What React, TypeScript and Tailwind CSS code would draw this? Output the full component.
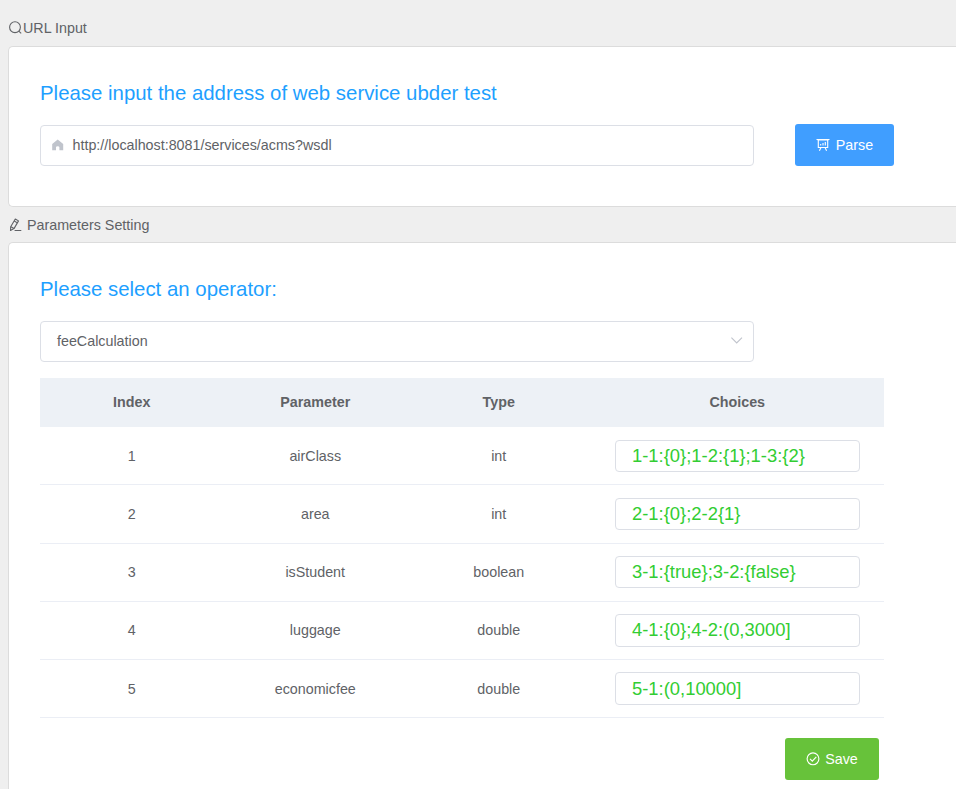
import React from "react";

type Row = { index: number; name: string; type: string; choices: string };

const rows: Row[] = [
  { index: 1, name: "airClass", type: "int", choices: "1-1:{0};1-2:{1};1-3:{2}" },
  { index: 2, name: "area", type: "int", choices: "2-1:{0};2-2{1}" },
  { index: 3, name: "isStudent", type: "boolean", choices: "3-1:{true};3-2:{false}" },
  { index: 4, name: "luggage", type: "double", choices: "4-1:{0};4-2:(0,3000]" },
  { index: 5, name: "economicfee", type: "double", choices: "5-1:(0,10000]" },
];

function SearchIcon() {
  return (
    <svg className="h-[14px] w-[14px] shrink-0" viewBox="0 0 14 14" fill="none" stroke="currentColor" strokeWidth="1.1">
      <circle cx="6" cy="6.2" r="5.4" />
      <path d="M9.8 10.2 12.2 12.4" />
    </svg>
  );
}

function EditIcon() {
  return (
    <svg className="h-[14px] w-[14px] shrink-0" viewBox="0 0 14 14" fill="none" stroke="currentColor" strokeWidth="1.1" strokeLinejoin="round">
      <path d="M6.3 1 9.5 2.9 5 10.6 1.5 12.5 1.7 8.8Z" />
      <path d="M5.2 3 8.4 4.9M1.9 8.8 5 10.6M5.6 12.5H12.3" />
    </svg>
  );
}

function HomeIcon() {
  return (
    <svg className="h-[14px] w-[14px] shrink-0 text-[#c0c4cc]" viewBox="0 0 14 14" fill="currentColor">
      <path d="M6.7 1.6 12.2 6V12.2H8.4V9.2Q8.4 8.2 6.7 8.2T5 9.2V12.2H1.2V6Z" />
    </svg>
  );
}

function BoardIcon() {
  return (
    <svg className="h-[14px] w-[14px] shrink-0" viewBox="0 0 14 14" fill="none" stroke="currentColor" strokeWidth="1.1">
      <path d="M.5 1.5H13.5M2.3 1.5V9.5H11.7V1.5M5 9.5 3.4 12.8M9 9.5 10.6 12.8M4.7 7.5V6M7 7.5V5M9.3 7.5V4" />
      <path d="M1.6 2.5H12.4" strokeOpacity="0.5" />
    </svg>
  );
}

function CheckIcon() {
  return (
    <svg className="h-[14px] w-[14px] shrink-0" viewBox="0 0 14 14" fill="none" stroke="currentColor" strokeWidth="1.15">
      <circle cx="7" cy="6.8" r="5.9" />
      <path d="M4 6.9 6.3 9.1 10.3 4.9" />
    </svg>
  );
}

function ChevronIcon() {
  return (
    <svg className="h-[14px] w-[14px] shrink-0 text-[#c0c4cc]" viewBox="0 0 14 14" fill="none" stroke="currentColor" strokeWidth="1.1">
      <path d="M1.4 3.6 6.7 9 12 3.6" />
    </svg>
  );
}

const columns = "grid grid-cols-[183.5px_183.5px_183.5px_293.5px]";

export default function App() {
  return (
    <div className="flex h-[789px] w-[956px] flex-col overflow-hidden bg-[#efefef] font-['Liberation_Sans',Arial,sans-serif] text-[14.3px] leading-5 text-[#606266]">
      <header className="flex h-[46px] shrink-0 items-center pt-[10px] pl-[9px]">
        <SearchIcon />
        <span>URL Input</span>
      </header>

      <section className="ml-2 h-[161px] shrink-0 rounded-l-[5px] border border-r-0 border-[#dcdcdc] bg-white pt-[31px] pl-[31px]">
        <h1 className="h-[30px] text-[20.4px] leading-[30px] text-[#1e9fff]">Please input the address of web service ubder test</h1>
        <div className="mt-4 flex items-end gap-[41px]">
          <div className="flex h-[41px] w-[714px] items-center gap-[7.5px] rounded border border-[#dcdfe6] pb-px pl-[10px]">
            <HomeIcon />
            <span>http://localhost:8081/services/acms?wsdl</span>
          </div>
          <button className="flex h-[42px] w-[99px] items-center justify-center gap-[6px] rounded-[3px] bg-[#409eff] text-white">
            <BoardIcon />
            <span>Parse</span>
          </button>
        </div>
      </section>

      <div className="flex h-[35px] shrink-0 items-center gap-[4px] pt-px pl-[9px]">
        <EditIcon />
        <span>Parameters Setting</span>
      </div>

      <section className="ml-2 h-[600px] shrink-0 rounded-tl-[5px] border-t border-l border-[#dcdcdc] bg-white pt-[31px] pl-[31px]">
        <h2 className="h-[30px] text-[20.4px] leading-[30px] text-[#1e9fff]">Please select an operator:</h2>
        <div className="mt-[17px] flex h-[41px] w-[714px] items-center justify-between rounded border border-[#dcdfe6] pr-[9px] pb-px pl-4">
          <span>feeCalculation</span>
          <ChevronIcon />
        </div>

        <div className="mt-4 w-[844px] text-center">
          <div className={`${columns} h-[49.2px] items-center bg-[#edf1f6] pb-px font-bold`}>
            <span>Index</span>
            <span>Parameter</span>
            <span>Type</span>
            <span>Choices</span>
          </div>
          {rows.map((row) => (
            <div key={row.index} className={`${columns} h-[58.2px] items-center border-b border-[#ebeef5]`}>
              <span>{row.index}</span>
              <span>{row.name}</span>
              <span>{row.type}</span>
              <div className="ml-[24.5px] flex h-[32.4px] w-[245px] items-center rounded border border-[#dcdfe6] pl-4 text-[18.4px] text-[#32cd32]">
                {row.choices}
              </div>
            </div>
          ))}
        </div>

        <div className="mt-5 flex w-[839px] justify-end">
          <button className="flex h-[42px] w-[94px] items-center justify-center gap-[5px] rounded-[3px] bg-[#67c23a] text-white">
            <CheckIcon />
            <span>Save</span>
          </button>
        </div>
      </section>
    </div>
  );
}
